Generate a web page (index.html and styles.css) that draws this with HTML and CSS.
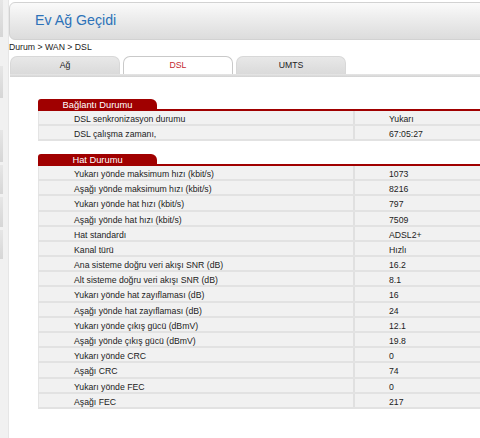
FILE: index.html
```html
<!DOCTYPE html>
<html lang="tr">
<head>
<meta charset="utf-8">
<title>Ev Ağ Geçidi</title>
<link rel="stylesheet" href="styles.css">
</head>
<body>
<div class="page">
  <aside class="side">
    <div class="seg s1"></div>
    <div class="seg s2"></div>
    <div class="seg s3"></div>
    <div class="seg s4"></div>
    <div class="seg s5"></div>
    <div class="seg s6"></div>
  </aside>
  <main class="main">
    <header class="header"><h1 class="title">Ev Ağ Geçidi</h1></header>
    <div class="crumb">Durum &gt; WAN &gt; DSL</div>
    <nav class="tabs">
      <div class="tab">Ağ</div>
      <div class="tab active">DSL</div>
      <div class="tab">UMTS</div>
    </nav>
    <div class="tabbar"></div>

    <section class="sec first">
      <div class="sec-head"><span class="sec-title">Bağlantı Durumu</span></div>
      <div class="row"><div class="lbl">DSL senkronizasyon durumu</div><div class="val">Yukarı</div></div>
      <div class="row"><div class="lbl">DSL çalışma zamanı,</div><div class="val">67:05:27</div></div>
    </section>

    <section class="sec second">
      <div class="sec-head"><span class="sec-title">Hat Durumu</span></div>
      <div class="row"><div class="lbl">Yukarı yönde maksimum hızı (kbit/s)</div><div class="val">1073</div></div>
      <div class="row"><div class="lbl">Aşağı yönde maksimum hızı (kbit/s)</div><div class="val">8216</div></div>
      <div class="row"><div class="lbl">Yukarı yönde hat hızı (kbit/s)</div><div class="val">797</div></div>
      <div class="row"><div class="lbl">Aşağı yönde hat hızı (kbit/s)</div><div class="val">7509</div></div>
      <div class="row"><div class="lbl">Hat standardı</div><div class="val">ADSL2+</div></div>
      <div class="row"><div class="lbl">Kanal türü</div><div class="val">Hızlı</div></div>
      <div class="row"><div class="lbl">Ana sisteme doğru veri akışı SNR (dB)</div><div class="val">16.2</div></div>
      <div class="row"><div class="lbl">Alt sisteme doğru veri akışı SNR (dB)</div><div class="val">8.1</div></div>
      <div class="row"><div class="lbl">Yukarı yönde hat zayıflaması (dB)</div><div class="val">16</div></div>
      <div class="row"><div class="lbl">Aşağı yönde hat zayıflaması (dB)</div><div class="val">24</div></div>
      <div class="row"><div class="lbl">Yukarı yönde çıkış gücü (dBmV)</div><div class="val">12.1</div></div>
      <div class="row"><div class="lbl">Aşağı yönde çıkış gücü (dBmV)</div><div class="val">19.8</div></div>
      <div class="row"><div class="lbl">Yukarı yönde CRC</div><div class="val">0</div></div>
      <div class="row"><div class="lbl">Aşağı CRC</div><div class="val">74</div></div>
      <div class="row"><div class="lbl">Yukarı yönde FEC</div><div class="val">0</div></div>
      <div class="row"><div class="lbl">Aşağı FEC</div><div class="val">217</div></div>
    </section>
  </main>
</div>
</body>
</html>
```

FILE: styles.css
```css
html, body {
  margin: 0;
  padding: 0;
  overflow: hidden;
  background: #fff;
}
body {
  font-family: "Liberation Sans", Arial, sans-serif;
  color: #222;
  width: 480px;
  height: 438px;
}
.page {
  display: flex;
  width: 560px;
  height: 438px;
}
.side {
  width: 8px;
  flex: 0 0 8px;
  background: #f1f1f1;
  border-right: 1px solid #e6e6e6;
  display: flex;
  flex-direction: column;
}
.seg {
  width: 3px;
  background: linear-gradient(#e6e6e6, #d6d6d6);
}
.s1 { height: 37px; }
.s2 { height: 32px; margin-top: 29px; }
.s3 { height: 32px; margin-top: 32px; }
.s4 { height: 29px; margin-top: 3px; }
.s5 { height: 30px; margin-top: 3px; }
.s6 { height: 29px; margin-top: 3px; }

.main {
  flex: 1;
  display: flex;
  flex-direction: column;
}
.header {
  margin-top: 2px;
  height: 36px;
  border: 1px solid #d2d2d2;
  border-radius: 6px;
  background: linear-gradient(#fafafa, #e9e9e9 55%, #dcdcdc);
  display: flex;
  align-items: center;
}
.title {
  margin: 0 0 0 25px;
  font-weight: normal;
  font-size: 14.2px;
  color: #2d72b8;
  line-height: 1;
  padding-bottom: 1px;
}
.crumb {
  font-size: 8.7px;
  line-height: 13px;
  height: 16px;
  padding-top: 1px;
  box-sizing: border-box;
  color: #1a1a1a;
}
.tabs {
  display: flex;
  gap: 3px;
  margin-left: 1px;
  height: 18px;
}
.tab {
  width: 110px;
  height: 18px;
  box-sizing: border-box;
  background: linear-gradient(#e8e8e8, #dadada);
  border: 1px solid #d8d8d8;
  border-bottom: none;
  border-radius: 7px 7px 0 0;
  font-size: 8.7px;
  line-height: 17px;
  text-align: center;
  color: #222;
}
.tab.active {
  background: #fff;
  border-color: #c9c9c9;
  color: #c3272f;
}
.tabbar {
  height: 3px;
  margin-left: 1px;
  background: linear-gradient(#e6e6e6, #d2d2d2);
}
.sec {
  margin-left: 29px;
}
.sec.first { margin-top: 22px; }
.sec.second { margin-top: 12.6px; }
.sec-head {
  border-bottom: 2px solid #a00000;
  height: 10px;
}
.sec-title {
  display: block;
  width: 119px;
  height: 11px;
  background: #a00000;
  border-radius: 3px 6px 0 0;
  color: #fff;
  font-size: 9.3px;
  line-height: 12px;
  text-align: center;
}
.row {
  display: flex;
  height: 15.2px;
  box-sizing: border-box;
  padding-top: 2px;
  background: #f1f1f1;
  border-bottom: 2px solid #e2e2e2;
  border-left: 1px solid #e4e4e4;
  font-size: 8.7px;
  line-height: 13px;
}
.lbl {
  width: 316px;
  box-sizing: border-box;
  padding-left: 35px;
  margin-top: -2px;
  padding-top: 2px;
  height: 13.2px;
  border-right: 2px solid #e0e0e0;
  white-space: nowrap;
}
.val {
  padding-left: 34px;
  white-space: nowrap;
}
```
